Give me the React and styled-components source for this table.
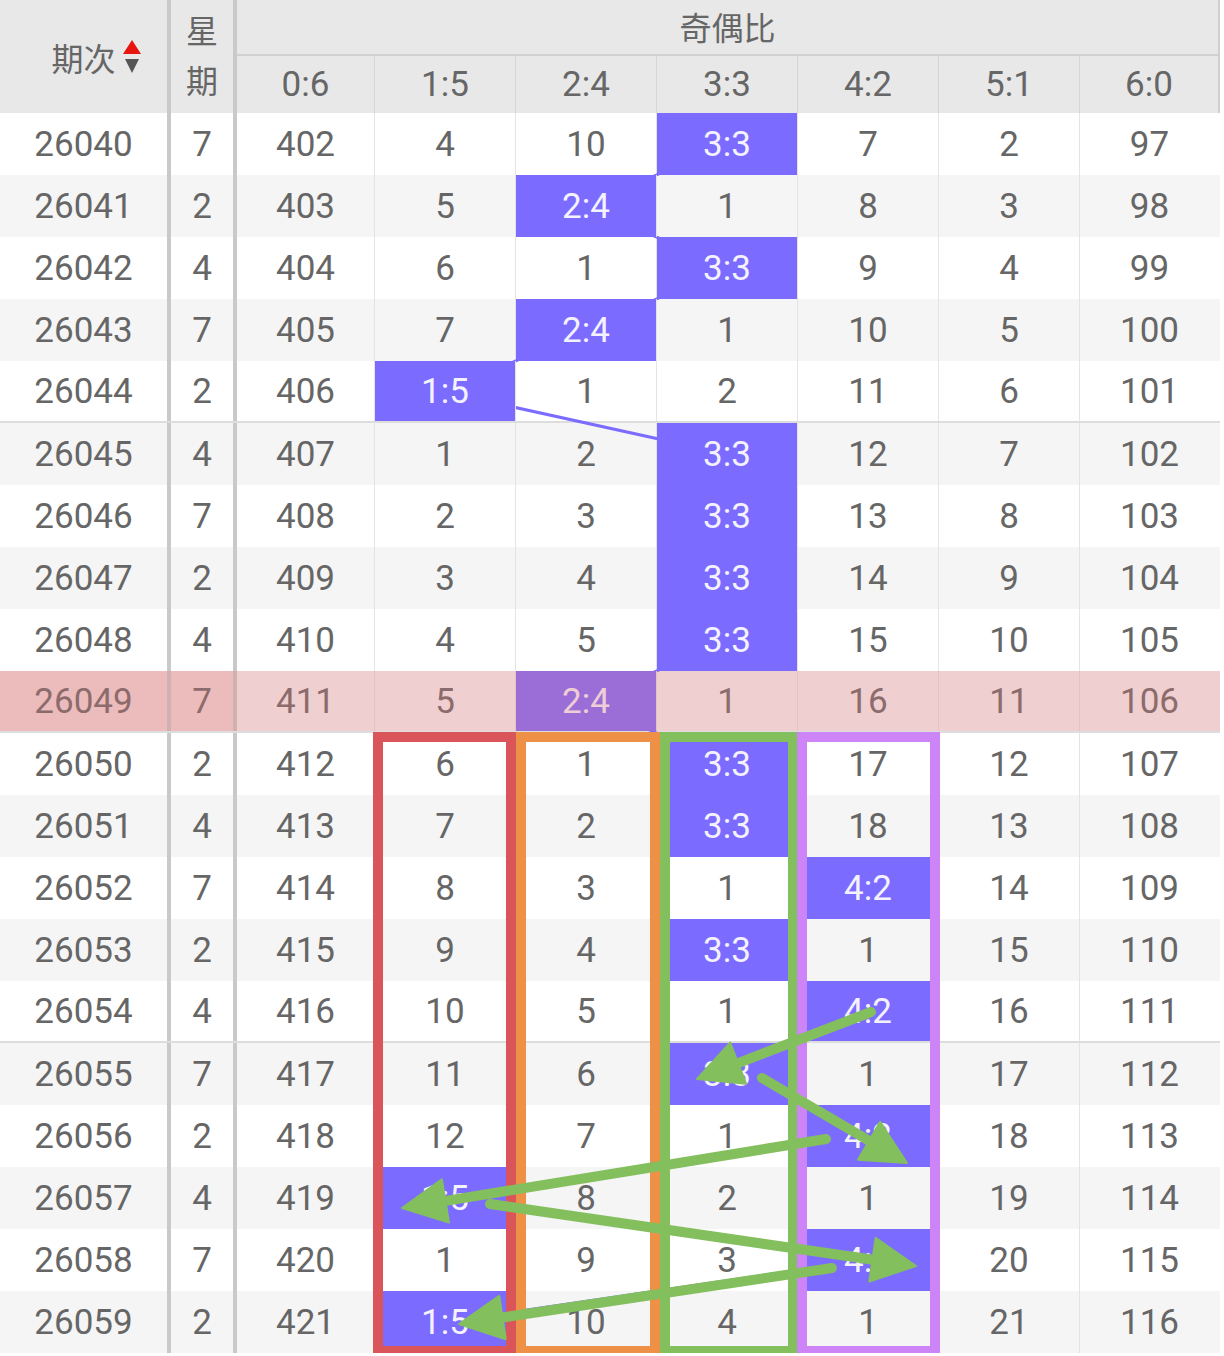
import React from 'react';
import styled, { createGlobalStyle, css } from 'styled-components';

const GlobalStyle = createGlobalStyle`
  html, body { margin: 0; padding: 0; background: #ffffff; }
  body { font-family: Roboto, "Noto Sans CJK SC", sans-serif; }
`;

const ROW_H = 62;
const HEAD_H = 113;
const COLS = [171, 66, 138, 141, 141, 141, 141, 141, 140];
const GRID = COLS.map((w) => `${w}px`).join(' ');
const RATIOS = ['0:6', '1:5', '2:4', '3:3', '4:2', '5:1', '6:0'];
const HIT = '#7b6bff';

const lefts = COLS.reduce((acc, w, i) => { acc.push(i === 0 ? 0 : acc[i - 1] + COLS[i - 1]); return acc; }, []);
const colCenter = (i) => lefts[i + 2] + (COLS[i + 2] - 1) / 2;

const DATA = [
  ['26040', 7, [402, 4, 10, 0, 7, 2, 97], 3],
  ['26041', 2, [403, 5, 0, 1, 8, 3, 98], 2],
  ['26042', 4, [404, 6, 1, 0, 9, 4, 99], 3],
  ['26043', 7, [405, 7, 0, 1, 10, 5, 100], 2],
  ['26044', 2, [406, 0, 1, 2, 11, 6, 101], 1],
  ['26045', 4, [407, 1, 2, 0, 12, 7, 102], 3],
  ['26046', 7, [408, 2, 3, 0, 13, 8, 103], 3],
  ['26047', 2, [409, 3, 4, 0, 14, 9, 104], 3],
  ['26048', 4, [410, 4, 5, 0, 15, 10, 105], 3],
  ['26049', 7, [411, 5, 0, 1, 16, 11, 106], 2],
  ['26050', 2, [412, 6, 1, 0, 17, 12, 107], 3],
  ['26051', 4, [413, 7, 2, 0, 18, 13, 108], 3],
  ['26052', 7, [414, 8, 3, 1, 0, 14, 109], 4],
  ['26053', 2, [415, 9, 4, 0, 1, 15, 110], 3],
  ['26054', 4, [416, 10, 5, 1, 0, 16, 111], 4],
  ['26055', 7, [417, 11, 6, 0, 1, 17, 112], 3],
  ['26056', 2, [418, 12, 7, 1, 0, 18, 113], 4],
  ['26057', 4, [419, 0, 8, 2, 1, 19, 114], 1],
  ['26058', 7, [420, 1, 9, 3, 0, 20, 115], 4],
  ['26059', 2, [421, 0, 10, 4, 1, 21, 116], 1],
];

const HIGHLIGHT_ROW = 9;

const BOXES = [
  { color: '#da5559', left: 373, width: 143 },
  { color: '#ee9146', left: 516, width: 144 },
  { color: '#84bf5e', left: 660, width: 138 },
  { color: '#cd84f6', left: 797, width: 143 },
];

const ARROWS = [
  [871, 1012, 697, 1079],
  [762, 1078, 907, 1163],
  [826, 1139, 402, 1208],
  [490, 1204, 916, 1266],
  [832, 1268, 459, 1324],
];

const Page = styled.div`
  position: relative;
  width: 1224px;
`;

const Table = styled.div`
  width: 1220px;
  color: #666666;
`;

const Head = styled.div`
  display: grid;
  grid-template-columns: ${GRID};
  grid-template-rows: 56px 57px;
  background: #e8e8e8;
  height: ${HEAD_H}px;
`;

const HeadCell = styled.div`
  display: flex;
  align-items: center;
  justify-content: center;
  box-sizing: border-box;
  font-size: ${(p) => (p.$cjk ? '32px' : '35px')};
  color: #666666;
  border-right: ${(p) => (p.$thick ? '4px solid #c9c9c9' : p.$edge ? '2px solid #d0d0d0' : '1px solid #d6d6d6')};
`;

const IssueHead = styled(HeadCell)`
  grid-row: 1 / span 2;
  grid-column: 1;
  padding-left: 26px;
  gap: 6px;
`;

const WeekHead = styled(HeadCell)`
  grid-row: 1 / span 2;
  grid-column: 2;
  flex-direction: column;
  line-height: 50px;
`;

const GroupHead = styled(HeadCell)`
  grid-row: 1;
  grid-column: 3 / span 7;
  border-bottom: 2px solid #d0d0d0;
  padding-bottom: 2px;
`;

const SubHead = styled(HeadCell)`
  grid-row: 2;
`;

const Body = styled.div`
  position: relative;
`;

const Row = styled.div`
  position: relative;
  display: grid;
  grid-template-columns: ${GRID};
  height: ${ROW_H}px;
  box-sizing: border-box;
  background: ${(p) => (p.$odd ? '#f5f5f5' : '#ffffff')};
  ${(p) => p.$sep && css`border-bottom: 2px solid #dddddd;`}
  ${(p) => p.$marked && css`
    &::after {
      content: '';
      position: absolute;
      inset: 0;
      background: rgba(226, 118, 118, 0.3);
      z-index: 3;
      pointer-events: none;
    }
  `}
`;

const Cell = styled.div`
  display: flex;
  align-items: center;
  justify-content: center;
  box-sizing: border-box;
  font-size: 35px;
  border-right: ${(p) => (p.$thick ? '4px solid #c9c9c9' : p.$edge ? '1px solid transparent' : '1px solid #e4e4e4')};
  ${(p) => p.$tint && css`background: rgba(226, 118, 118, 0.22);`}
  ${(p) => p.$hit && css`
    position: relative;
    z-index: 2;
    background: ${HIT};
    color: #f4f2ff;
  `}
`;

const LinkLayer = styled.svg`
  position: absolute;
  left: 0;
  top: 0;
  z-index: 1;
  pointer-events: none;
`;

const Frame = styled.div`
  position: absolute;
  top: ${HEAD_H + ROW_H * 10 - 1}px;
  height: ${1356 - (HEAD_H + ROW_H * 10 - 1)}px;
  box-sizing: border-box;
  border: 10px solid ${(p) => p.$color};
  z-index: 4;
  pointer-events: none;
`;

const ArrowLayer = styled.svg`
  position: absolute;
  left: 0;
  top: 0;
  z-index: 6;
  pointer-events: none;
`;

function SortIcon() {
  return (
    <svg width="20" height="34" viewBox="0 0 20 34">
      <polygon points="10,0 19,14 1,14" fill="#e8140f" />
      <polygon points="3,19 17,19 10,33" fill="#555555" />
    </svg>
  );
}

function Arrow({ x1, y1, x2, y2 }) {
  const dx = x2 - x1;
  const dy = y2 - y1;
  const len = Math.hypot(dx, dy);
  const ux = dx / len;
  const uy = dy / len;
  const L = 44;
  const W = 22;
  const bx = x2 - ux * L;
  const by = y2 - uy * L;
  const px = -uy;
  const py = ux;
  const pts = `${x2},${y2} ${bx + px * W},${by + py * W} ${bx - px * W},${by - py * W}`;
  return (
    <g>
      <line x1={x1} y1={y1} x2={bx + ux * 4} y2={by + uy * 4} stroke="#84bf5e" strokeWidth="10" strokeLinecap="round" />
      <polygon points={pts} fill="#84bf5e" strokeLinejoin="round" stroke="#84bf5e" strokeWidth="2" />
    </g>
  );
}

export default function App() {
  const linkPts = DATA.map(([, , , hit], r) => `${colCenter(hit)},${r * ROW_H + ROW_H / 2}`).join(' ');
  return (
    <Page>
      <GlobalStyle />
      <Table>
        <Head>
          <IssueHead $cjk $thick>
            <span>期次</span>
            <SortIcon />
          </IssueHead>
          <WeekHead $cjk $thick>
            <span>星</span>
            <span>期</span>
          </WeekHead>
          <GroupHead $cjk $edge>奇偶比</GroupHead>
          {RATIOS.map((r, i) => (
            <SubHead key={r} $edge={i === 6}>{r}</SubHead>
          ))}
        </Head>
        <Body>
          <LinkLayer width="1220" height={DATA.length * ROW_H}>
            <polyline points={linkPts} fill="none" stroke={HIT} strokeWidth="3" />
          </LinkLayer>
          {DATA.map(([no, wk, vals, hit], r) => {
            const marked = r === HIGHLIGHT_ROW;
            return (
              <Row key={no} $odd={r % 2 === 1} $sep={(r + 1) % 5 === 0 && r !== DATA.length - 1} $marked={marked}>
                <Cell $thick $tint={marked}>{no}</Cell>
                <Cell $thick $tint={marked}>{wk}</Cell>
                {vals.map((v, i) => (
                  <Cell key={i} $hit={i === hit} $edge={i === 6}>
                    {i === hit ? RATIOS[i] : v}
                  </Cell>
                ))}
              </Row>
            );
          })}
        </Body>
      </Table>
      {BOXES.map((b) => (
        <Frame key={b.color} $color={b.color} style={{ left: b.left, width: b.width }} />
      ))}
      <ArrowLayer width="1224" height="1356">
        {ARROWS.map(([x1, y1, x2, y2], i) => (
          <Arrow key={i} x1={x1} y1={y1} x2={x2} y2={y2} />
        ))}
      </ArrowLayer>
    </Page>
  );
}
